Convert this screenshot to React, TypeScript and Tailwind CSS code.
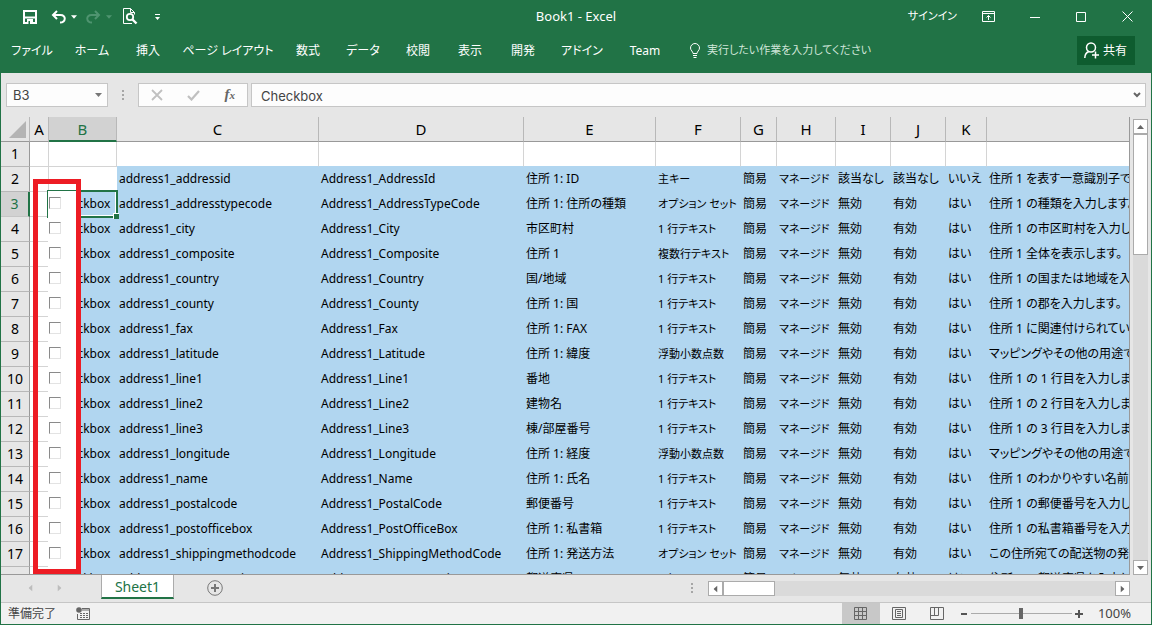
const columns = [
  { id: 'A', width: 'w-[19px]' },
  { id: 'B', width: 'w-[68px]' },
  { id: 'C', width: 'w-[202px]' },
  { id: 'D', width: 'w-[205px]' },
  { id: 'E', width: 'w-[132px]' },
  { id: 'F', width: 'w-[85px]' },
  { id: 'G', width: 'w-[36px]' },
  { id: 'H', width: 'w-[59px]' },
  { id: 'I', width: 'w-[55px]' },
  { id: 'J', width: 'w-[55px]' },
  { id: 'K', width: 'w-[41px]' },
];

const menuItems = [
  { label: 'ファイル', width: 'w-[60px]' },
  { label: 'ホーム', width: 'w-[60px]' },
  { label: '挿入', width: 'w-[52px]' },
  { label: 'ページ レイアウト', width: 'w-[108px]' },
  { label: '数式', width: 'w-[52px]' },
  { label: 'データ', width: 'w-[58px]' },
  { label: '校閲', width: 'w-[52px]' },
  { label: '表示', width: 'w-[52px]' },
  { label: '開発', width: 'w-[54px]' },
  { label: 'アドイン', width: 'w-[64px]' },
  { label: 'Team', width: 'w-[62px]' },
];

const text = '1 行テキスト';

// logical name, schema name, display name, type, custom, audit, search, description
const rows = [
  ['address1_addressid', 'Address1_AddressId', '住所 1: ID', '主キー', '該当なし', '該当なし', 'いいえ', '住所 1 を表す一意識別子です。'],
  ['address1_addresstypecode', 'Address1_AddressTypeCode', '住所 1: 住所の種類', 'オプション セット', '無効', '有効', 'はい', '住所 1 の種類を入力します。'],
  ['address1_city', 'Address1_City', '市区町村', text, '無効', '有効', 'はい', '住所 1 の市区町村を入力します。'],
  ['address1_composite', 'Address1_Composite', '住所 1', '複数行テキスト', '無効', '有効', 'はい', '住所 1 全体を表示します。'],
  ['address1_country', 'Address1_Country', '国/地域', text, '無効', '有効', 'はい', '住所 1 の国または地域を入力します。'],
  ['address1_county', 'Address1_County', '住所 1: 国', text, '無効', '有効', 'はい', '住所 1 の郡を入力します。'],
  ['address1_fax', 'Address1_Fax', '住所 1: FAX', text, '無効', '有効', 'はい', '住所 1 に関連付けられている FAX'],
  ['address1_latitude', 'Address1_Latitude', '住所 1: 緯度', '浮動小数点数', '無効', '有効', 'はい', 'マッピングやその他の用途で使用する'],
  ['address1_line1', 'Address1_Line1', '番地', text, '無効', '有効', 'はい', '住所 1 の 1 行目を入力します。'],
  ['address1_line2', 'Address1_Line2', '建物名', text, '無効', '有効', 'はい', '住所 1 の 2 行目を入力します。'],
  ['address1_line3', 'Address1_Line3', '棟/部屋番号', text, '無効', '有効', 'はい', '住所 1 の 3 行目を入力します。'],
  ['address1_longitude', 'Address1_Longitude', '住所 1: 経度', '浮動小数点数', '無効', '有効', 'はい', 'マッピングやその他の用途で使用する'],
  ['address1_name', 'Address1_Name', '住所 1: 氏名', text, '無効', '有効', 'はい', '住所 1 のわかりやすい名前 (本社など)'],
  ['address1_postalcode', 'Address1_PostalCode', '郵便番号', text, '無効', '有効', 'はい', '住所 1 の郵便番号を入力します。'],
  ['address1_postofficebox', 'Address1_PostOfficeBox', '住所 1: 私書箱', text, '無効', '有効', 'はい', '住所 1 の私書箱番号を入力します。'],
  ['address1_shippingmethodcode', 'Address1_ShippingMethodCode', '住所 1: 発送方法', 'オプション セット', '無効', '有効', 'はい', 'この住所宛ての配送物の発送方法'],
  ['address1_stateorprovince', 'Address1_StateOrProvince', '都道府県', text, '無効', '有効', 'はい', '住所 1 の都道府県を入力します。'],
];

const Caret = ({ className = 'w-[7px]' }) => (
  <svg viewBox="0 0 7 4" className={`h-1 shrink-0 ${className}`} fill="currentColor">
    <path d="M0 0h7L3.5 4z" />
  </svg>
);

const Dots = () => (
  <svg viewBox="0 0 2 10" className="h-[10px] w-[2px] shrink-0 fill-[#a6a6a6]">
    <path d="M0 0h2v2H0zM0 4h2v2H0zM0 8h2v2H0z" />
  </svg>
);

const TitleBar = () => (
  <div className="grid h-[33px] grid-cols-3 items-center">
    <div className="flex items-center pl-[22px]">
      <button aria-label="上書き保存">
        <svg viewBox="0 0 14 14" className="size-[14px]" fill="none" stroke="currentColor">
          <path d="M1 1h12v12H1z" strokeWidth="2" />
          <path d="M1 7.5h12" strokeWidth="2" />
          <path d="M4 9h6v5H4z" fill="currentColor" stroke="none" />
          <path d="M5.500 11h1.500v3H5.500z" fill="#217346" stroke="none" />
        </svg>
      </button>
      <button aria-label="元に戻す" className="ml-[14px] flex items-center gap-[5px]">
        <svg viewBox="0 0 15 14" className="h-[14px] w-[15px]" fill="none" stroke="currentColor" strokeWidth="2">
          <path d="M6 1L2 5l4 4M2 5h7.5c6 0 5.500 7.500-.5 7.500" />
        </svg>
        <Caret className="w-[6px]" />
      </button>
      <button aria-label="やり直し" className="ml-[9px] flex items-center gap-[5px] text-[#4f9470]">
        <svg viewBox="0 0 15 14" className="h-[14px] w-[15px]" fill="none" stroke="currentColor" strokeWidth="2">
          <path d="M9 1l4 4-4 4M13 5H5.500c-6 0-5.500 7.500.5 7.500" />
        </svg>
        <Caret className="w-[6px]" />
      </button>
      <button aria-label="印刷プレビュー" className="ml-[11px]">
        <svg viewBox="0 0 15 17" className="h-[17px] w-[15px]" fill="none" stroke="currentColor">
          <path d="M9 15.500H.5V.5h7l4 4v2M7.500.5v4h4" />
          <circle cx="7" cy="9" r="3.200" strokeWidth="1.800" />
          <path d="M9.500 11.500l4 4" strokeWidth="2.400" />
        </svg>
      </button>
      <button aria-label="クイック アクセス ツール バーのユーザー設定" className="ml-[17px]">
        <svg viewBox="0 0 5 6" className="h-[6px] w-[5px]" fill="currentColor">
          <path d="M0 0h5v1H0zM0 3h5L2.500 6z" />
        </svg>
      </button>
    </div>
    <h1 className="text-center text-[13px]">Book1 - Excel</h1>
    <div className="flex items-center justify-end pr-[18px]">
      <button className="mr-[25px] text-[11px]">サインイン</button>
      <button aria-label="リボンの表示オプション" className="mr-[35px]">
        <svg viewBox="0 0 13 11" className="h-[11px] w-[13px]" fill="none" stroke="currentColor">
          <path d="M.5.5h12v10H.5zM.5 2.500h12M6.500 9V4.500M4.500 6.500l2-2 2 2" />
        </svg>
      </button>
      <button aria-label="最小化" className="mr-[36px]">
        <svg viewBox="0 0 10 10" className="size-[10px]" stroke="currentColor"><path d="M0 5.500h10" /></svg>
      </button>
      <button aria-label="最大化" className="mr-[36px]">
        <svg viewBox="0 0 10 10" className="size-[10px]" fill="none" stroke="currentColor"><path d="M.5.5h9v9h-9z" /></svg>
      </button>
      <button aria-label="閉じる">
        <svg viewBox="0 0 11 11" className="size-[11px]" stroke="currentColor"><path d="M.5.5l10 10M10.500.5l-10 10" /></svg>
      </button>
    </div>
  </div>
);

const Ribbon = () => (
  <div className="flex h-10 items-start">
    <nav className="flex h-[35px] items-center pl-px">
      {menuItems.map((item) => (
        <button key={item.label} className={`text-center text-xs whitespace-nowrap ${item.width}`}>
          {item.label}
        </button>
      ))}
    </nav>
    <button className="ml-[14px] flex h-[35px] items-center gap-[7px] text-[11px] whitespace-nowrap text-[#cfe5d8]">
      <svg viewBox="0 0 10 15" className="h-[15px] w-[10px] text-white" fill="none" stroke="currentColor">
        <path d="M3 10.500c0-2-2.500-3-2.500-5.500a4.500 4.500 0 0 1 9 0c0 2.500-2.500 3.500-2.500 5.500zM3 12.500h4M3.500 14.500h3" />
      </svg>
      実行したい作業を入力してください
    </button>
    <button className="mt-[3px] mr-4 ml-auto flex h-[29px] w-[58px] items-center gap-[4px] bg-[#0e5c2f] pl-[7px] text-xs whitespace-nowrap">
      <svg viewBox="0 0 15 17" className="h-[17px] w-[15px] shrink-0" fill="none" stroke="currentColor" strokeWidth="1.500">
        <circle cx="7" cy="5.500" r="4.500" />
        <path d="M.8 16c0-3.500 1.500-5.500 4-6.500M11.500 9.500v7M8 13h7" />
      </svg>
      共有
    </button>
  </div>
);

const FormulaBar = () => (
  <div className="flex h-11 items-center px-[5px] text-xs text-[#444]">
    <div className="flex h-6 w-[102px] items-center border border-[#c6c6c6] bg-[#fdfdfd] pr-[5px]">
      <input aria-label="名前ボックス" defaultValue="B3" className="w-full min-w-0 pt-px pl-[6px] font-[Inter] text-[13px] outline-none" />
      <Caret className="w-[7px] text-[#777]" />
    </div>
    <div className="mx-[14px]">
      <Dots />
    </div>
    <div className="flex h-6 w-[110px] items-center justify-between border border-[#c6c6c6] bg-[#fdfdfd] px-[12px]">
      <button aria-label="キャンセル">
        <svg viewBox="0 0 12 12" className="size-3" stroke="#c0c0c0" strokeWidth="1.800"><path d="M1 1l10 10M11 1L1 11" /></svg>
      </button>
      <button aria-label="入力">
        <svg viewBox="0 0 13 11" className="h-[11px] w-[13px]" fill="none" stroke="#c0c0c0" strokeWidth="2.200"><path d="M1 6l3.500 3.500L12 1" /></svg>
      </button>
      <button aria-label="関数の挿入" className="pb-[2px] font-['Liberation_Serif',serif] text-[15px] leading-4 font-bold text-[#666] italic">
        f<span className="text-[11px]">x</span>
      </button>
    </div>
    <div className="ml-[3px] flex h-6 flex-1 items-center border border-[#c6c6c6] bg-[#fdfdfd] pr-[4px]">
      <input aria-label="数式バー" defaultValue="Checkbox" className="w-full min-w-0 pt-[3px] pl-[9px] font-[Inter] text-[13px] outline-none" />
      <svg viewBox="0 0 8 6" className="h-[6px] w-2 shrink-0" fill="none" stroke="#666" strokeWidth="2"><path d="M1 1l3 3 3-3" /></svg>
    </div>
  </div>
);

const headerCell = 'h-[25px] border-r border-b border-r-[#b8b8b8] border-b-[#999] p-0 pb-px text-center text-[15px] leading-5 font-normal';

const ColumnHeaders = () => (
  <thead>
    <tr>
      <td className={`${headerCell} align-bottom`}>
        <svg viewBox="0 0 17 17" className="mb-[2px] ml-2 size-[17px] fill-[#b4b4b4]"><path d="M17 0v17H0z" /></svg>
      </td>
      {columns.map(({ id }) => (
        <th
          key={id}
          scope="col"
          className={id === 'B' ? 'h-[25px] border-r border-b-2 border-r-[#b8b8b8] border-b-[#217346] bg-[#d2d2d2] p-0 text-center text-[15px] leading-5 font-normal text-[#217346]' : headerCell}
        >
          {id}
        </th>
      ))}
      <th scope="col" aria-label="L" className="border-b border-[#999]" />
    </tr>
  </thead>
);

const RowHeader = ({ n }: { n: number }) => (
  <th
    scope="row"
    className={
      n === 3
        ? 'h-[25px] border-r-2 border-b border-r-[#217346] border-b-[#c6c6c6] bg-[#d2d2d2] p-0 pb-px text-center text-sm font-normal text-[#217346]'
        : 'h-[25px] border-r border-b border-r-[#999] border-b-[#b8b8b8] bg-[#e6e6e6] p-0 pb-px text-center text-sm font-normal'
    }
  >
    {n}
  </th>
);

const CheckboxCell = ({ n }: { n: number }) => (
  <td className="relative bg-[#b1d6f0] p-0 pb-[2px] text-center">
    Checkbox
    {n === 3 && (
      <div className="pointer-events-none absolute -top-[2px] -right-px -bottom-px -left-[2px] z-10 border-2 border-[#217346]">
        <div className="h-full border-r border-b border-white" />
        <div className="absolute -right-[3px] -bottom-[3px] size-[6px] border-t border-l border-white bg-[#217346]" />
      </div>
    )}
    <label className="absolute -top-px -left-px z-20 flex h-[25px] w-7 items-center bg-white pb-px pl-px">
      <input
        type="checkbox"
        aria-label={`${n} 行目を選択`}
        className="size-3 appearance-none border border-t-[#8a8a8a] border-r-[#e3e3e3] border-b-[#e3e3e3] border-l-[#8a8a8a] bg-white checked:bg-[#217346]"
      />
    </label>
  </td>
);

const Sheet = () => (
  <div className="relative min-w-0 flex-1 overflow-hidden border-r border-b border-[#999]">
    <table className="w-full table-fixed border-separate border-spacing-0 text-xs whitespace-nowrap text-black">
      <colgroup>
        <col className="w-[29px]" />
        {columns.map(({ id, width }) => (
          <col key={id} className={width} />
        ))}
        <col />
      </colgroup>
      <ColumnHeaders />
      <tbody>
        <tr className="bg-white">
          <RowHeader n={1} />
          {columns.map(({ id }) => (
            <td key={id} className={`border-r border-b border-r-[#d4d4d4] p-0 ${id === 'A' || id === 'B' ? 'border-b-[#d4d4d4]' : 'border-b-[#b1d6f0]'}`} />
          ))}
          <td className="border-b border-[#b1d6f0]" />
        </tr>
        {rows.map(([logical, schema, display, type, custom, audit, search, description], i) => (
          <tr key={logical}>
            <RowHeader n={i + 2} />
            <td className="border-r border-b border-[#d4d4d4] bg-white p-0" />
            {i === 0 ? <td className="border-b border-[#d4d4d4] bg-white p-0" /> : <CheckboxCell n={i + 2} />}
            {[logical, schema, display, type, '簡易', 'マネージド', custom, audit, search, description].map((value, j) => (
              <td
                key={j}
                className={`overflow-hidden bg-[#b1d6f0] p-0 pb-[2px] pl-[2px] ${j === 3 || j === 5 ? 'text-[11px] leading-4' : ''}`}
              >
                {value}
              </td>
            ))}
          </tr>
        ))}
      </tbody>
    </table>
    {/* Highlight frame around the checkboxes */}
    <div className="pointer-events-none absolute top-[62px] bottom-0 left-8 z-30 w-12 border-[5px] border-[#ed1c24]" />
  </div>
);

const arrowButton = 'flex size-[15px] shrink-0 items-center justify-center border border-[#ababab] bg-white text-[#666]';

const VerticalScrollbar = () => (
  <div className="mt-[2px] mr-[3px] ml-[3px] flex w-[15px] flex-col bg-[#dadada]">
    <button aria-label="上へスクロール" className={arrowButton}>
      <Caret className="w-[7px] rotate-180" />
    </button>
    <div className="h-[121px] border border-[#ababab] bg-white" />
    <button aria-label="下へスクロール" className={`${arrowButton} mt-auto`}>
      <Caret />
    </button>
  </div>
);

const SheetTabs = () => (
  <div className="flex h-[27px] items-start">
    <div className="flex h-[26px] w-[100px] items-center gap-[22px] pl-[26px] text-[#bdbdbd]">
      <button aria-label="前のシート">
        <Caret className="w-[7px] rotate-90" />
      </button>
      <button aria-label="次のシート">
        <Caret className="w-[7px] -rotate-90" />
      </button>
    </div>
    <button className="h-6 w-[73px] border-x border-b-2 border-x-[#ababab] border-b-[#217346] bg-white pt-[2px] text-sm leading-5 text-[#217346]">
      Sheet1
    </button>
    <button aria-label="新しいシート" className="mt-[5px] ml-[33px]">
      <svg viewBox="0 0 16 16" className="size-4" fill="none" stroke="#777">
        <circle cx="8" cy="8" r="7.300" />
        <path d="M8 4v8M4 8h8" strokeWidth="2" />
      </svg>
    </button>
    <div className="mt-2 ml-auto">
      <Dots />
    </div>
    <div className="mt-[6px] mr-[21px] ml-[15px] flex w-[422px] bg-[#dadada]">
      <button aria-label="左へスクロール" className={arrowButton}>
        <Caret className="w-[7px] rotate-90" />
      </button>
      <div className="w-[52px] border border-[#ababab] bg-white" />
      <button aria-label="右へスクロール" className={`${arrowButton} ml-auto`}>
        <Caret className="w-[7px] -rotate-90" />
      </button>
    </div>
  </div>
);

const StatusBar = () => (
  <div className="flex h-[22px] items-center border-t border-[#c6c6c6] bg-[#f1f1f1] text-xs text-[#444]">
    <span className="ml-[7px]">準備完了</span>
    <button aria-label="マクロの記録" className="ml-5">
      <svg viewBox="0 0 14 13" className="h-[13px] w-[14px]" fill="none" stroke="#666">
        <path d="M6 1.500h7.500v11H1.500V7M6 3h7" />
        <path d="M4 6.500h8M4 8.500h8M4 10.500h8" strokeDasharray="2 1" />
        <circle cx="3" cy="3" r="2.800" fill="#666" stroke="none" />
      </svg>
    </button>
    <div className="ml-auto flex h-full items-center">
      <button aria-label="標準" className="flex h-full w-[38px] items-center justify-center bg-[#c8c8c8]">
        <svg viewBox="0 0 13 13" className="size-[13px]" fill="none" stroke="#666">
          <path d="M.5.5h12v12H.5zM4.500.5v12M8.500.5v12M.5 4.500h12M.5 8.500h12" />
        </svg>
      </button>
      <button aria-label="ページ レイアウト表示" className="flex w-[38px] justify-center">
        <svg viewBox="0 0 14 13" className="h-[13px] w-[14px]" fill="none" stroke="#666">
          <path d="M.5.5h13v12H.5zM3.500 2.500h7v8h-7zM5 4.500h4M5 6.500h4M5 8.500h4" />
        </svg>
      </button>
      <button aria-label="改ページ プレビュー" className="flex w-[38px] justify-center">
        <svg viewBox="0 0 14 13" className="h-[13px] w-[14px]" fill="none" stroke="#666">
          <path d="M.5.5h13v12H.5zM4.500.5v8M8.500.5v8M.5 8.500h8" />
        </svg>
      </button>
      <button aria-label="縮小" className="ml-[4px]">
        <svg viewBox="0 0 8 8" className="size-2" stroke="#555" strokeWidth="2"><path d="M1 4h6" /></svg>
      </button>
      <input
        type="range"
        aria-label="ズーム"
        className="mx-[3px] h-3 w-[101px] appearance-none bg-[linear-gradient(#ababab,#ababab)] bg-[length:100%_1px] bg-center bg-no-repeat [&::-webkit-slider-thumb]:h-[11px] [&::-webkit-slider-thumb]:w-1 [&::-webkit-slider-thumb]:appearance-none [&::-webkit-slider-thumb]:bg-[#666]"
      />
      <button aria-label="拡大">
        <svg viewBox="0 0 8 8" className="size-2" stroke="#555" strokeWidth="2"><path d="M0 4h8M4 0v8" /></svg>
      </button>
      <span className="mr-5 ml-[15px] text-[13px]">100%</span>
    </div>
  </div>
);

const App = () => {
  return (
    <div className="flex h-screen flex-col border-x border-b border-[#217346] bg-[#e6e6e6] font-['Noto_Sans','Noto_Sans_CJK_JP',sans-serif] [font-feature-settings:'palt']">
      <header className="bg-[#217346] text-white">
        <TitleBar />
        <Ribbon />
      </header>
      <FormulaBar />
      <main className="flex min-h-0 flex-1">
        <Sheet />
        <VerticalScrollbar />
      </main>
      <SheetTabs />
      <StatusBar />
    </div>
  );
};

export default App;
